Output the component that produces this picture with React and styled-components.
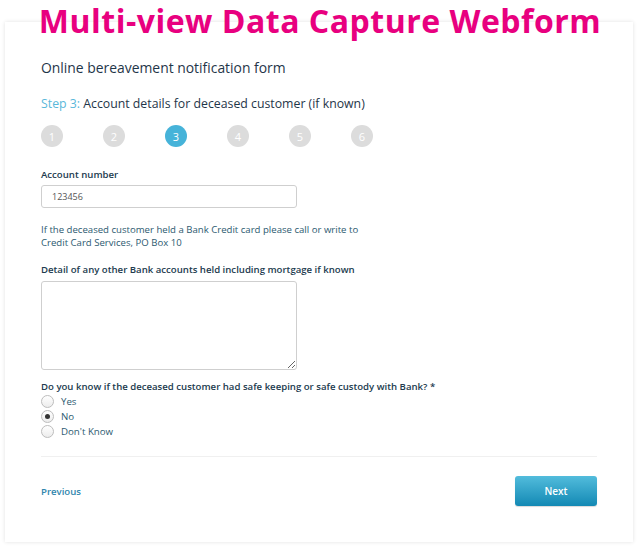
import React from "react"
import styled, { createGlobalStyle } from "styled-components"

const GlobalStyle = createGlobalStyle`
  html, body {
    margin: 0;
    padding: 0;
    background: #ffffff;
  }
  body {
    font-family: "Open Sans", "DejaVu Sans", sans-serif;
    color: #1f3649;
  }
`

const Page = styled.div`
  position: relative;
  width: 640px;
  height: 549px;
  padding: 22px 7px 0 5px;
  box-sizing: border-box;
`

const Banner = styled.h1`
  position: absolute;
  top: 1px;
  left: 0;
  right: 0;
  margin: 0;
  text-align: center;
  font-family: "Open Sans", sans-serif;
  font-weight: 700;
  font-size: 32px;
  line-height: 40px;
  letter-spacing: 0.5px;
  color: #e8007f;
  z-index: 2;
`

const Card = styled.div`
  height: 520px;
  background: #fff;
  box-shadow: 0 0 4px rgba(0, 0, 0, 0.12);
  padding: 36px 36px 0 36px;
  box-sizing: border-box;
  display: flex;
  flex-direction: column;
`

const FormTitle = styled.h2`
  margin: 0;
  font-size: 13.9px;
  font-weight: 400;
  line-height: 20px;
  color: #1f3649;
`

const StepTitle = styled.h3`
  margin: 16px 0 0;
  font-size: 12.3px;
  font-weight: 400;
  line-height: 20px;
  color: #1f3649;
`

const StepNo = styled.span`
  color: #5ab8da;
`

const Steps = styled.div`
  display: flex;
  gap: 40px;
  margin-top: 11px;
`

const Step = styled.div`
  width: 22px;
  height: 22px;
  border-radius: 50%;
  background: ${p => (p.active ? "#46b3d9" : "#dcdcdc")};
  color: #fff;
  font-size: 11px;
  display: flex;
  align-items: center;
  justify-content: center;
`

const Field = styled.div`
  display: flex;
  flex-direction: column;
  margin-top: ${p => p.top || 0}px;
`

const Label = styled.label`
  font-size: 9.6px;
  font-weight: 600;
  line-height: 14px;
  color: #213a4e;
`

const Input = styled.input`
  width: 256px;
  height: 23px;
  box-sizing: border-box;
  margin-top: 3px;
  border: 1px solid #cfcfcf;
  border-radius: 3px;
  padding: 0 10px;
  font-family: inherit;
  font-size: 9px;
  color: #555;
  outline: none;
`

const Help = styled.p`
  margin: 15px 0 0;
  font-size: 9.6px;
  line-height: 13px;
  color: #2c5a70;
`

const TextArea = styled.textarea`
  width: 256px;
  height: 89px;
  box-sizing: border-box;
  margin-top: 4px;
  border: 1px solid #cfcfcf;
  border-radius: 3px;
  font-family: inherit;
  resize: vertical;
  outline: none;
`

const RadioRow = styled.label`
  display: flex;
  align-items: center;
  gap: 7px;
  height: 15px;
  font-size: 9.7px;
  color: #2c5a70;
`

const RadioDot = styled.span`
  width: 11px;
  height: 11px;
  border-radius: 50%;
  border: 1px solid #bdbdbd;
  background: linear-gradient(#fff, #ececec);
  display: flex;
  align-items: center;
  justify-content: center;

  &::after {
    content: "";
    width: 5px;
    height: 5px;
    border-radius: 50%;
    background: ${p => (p.checked ? "#333" : "transparent")};
  }
`

const Divider = styled.hr`
  margin: 17px 0 0;
  border: 0;
  border-top: 1px solid #f0f0f0;
`

const Footer = styled.div`
  display: flex;
  align-items: center;
  justify-content: space-between;
  margin-top: 19px;
`

const PrevLink = styled.a`
  font-size: 9.6px;
  font-weight: 600;
  color: #2f86ad;
  text-decoration: none;
`

const NextButton = styled.button`
  width: 82px;
  height: 30px;
  border: 0;
  border-radius: 3px;
  background: linear-gradient(#52bcdc, #1389b4);
  color: #fff;
  font-family: inherit;
  font-size: 10px;
  font-weight: 600;
  box-shadow: 0 1px 1px rgba(0, 0, 0, 0.15);
`

const options = [
  { label: "Yes", checked: false },
  { label: "No", checked: true },
  { label: "Don't Know", checked: false },
]

export default function App() {
  return (
    <>
      <GlobalStyle />
      <Page>
        <Banner>Multi-view Data Capture Webform</Banner>
        <Card>
          <FormTitle>Online bereavement notification form</FormTitle>
          <StepTitle>
            <StepNo>Step 3:</StepNo> Account details for deceased customer (if known)
          </StepTitle>
          <Steps>
            {[1, 2, 3, 4, 5, 6].map(n => (
              <Step key={n} active={n === 3}>
                {n}
              </Step>
            ))}
          </Steps>
          <Field top={21}>
            <Label>Account number</Label>
            <Input defaultValue="123456" />
          </Field>
          <Help>
            If the deceased customer held a Bank Credit card please call or write to
            <br />
            Credit Card Services, PO Box 10
          </Help>
          <Field top={14}>
            <Label>Detail of any other Bank accounts held including mortgage if known</Label>
            <TextArea />
          </Field>
          <Field top={10}>
            <Label>Do you know if the deceased customer had safe keeping or safe custody with Bank? *</Label>
            {options.map(o => (
              <RadioRow key={o.label}>
                <RadioDot checked={o.checked} />
                {o.label}
              </RadioRow>
            ))}
          </Field>
          <Divider />
          <Footer>
            <PrevLink href="#">Previous</PrevLink>
            <NextButton>Next</NextButton>
          </Footer>
        </Card>
      </Page>
    </>
  )
}
